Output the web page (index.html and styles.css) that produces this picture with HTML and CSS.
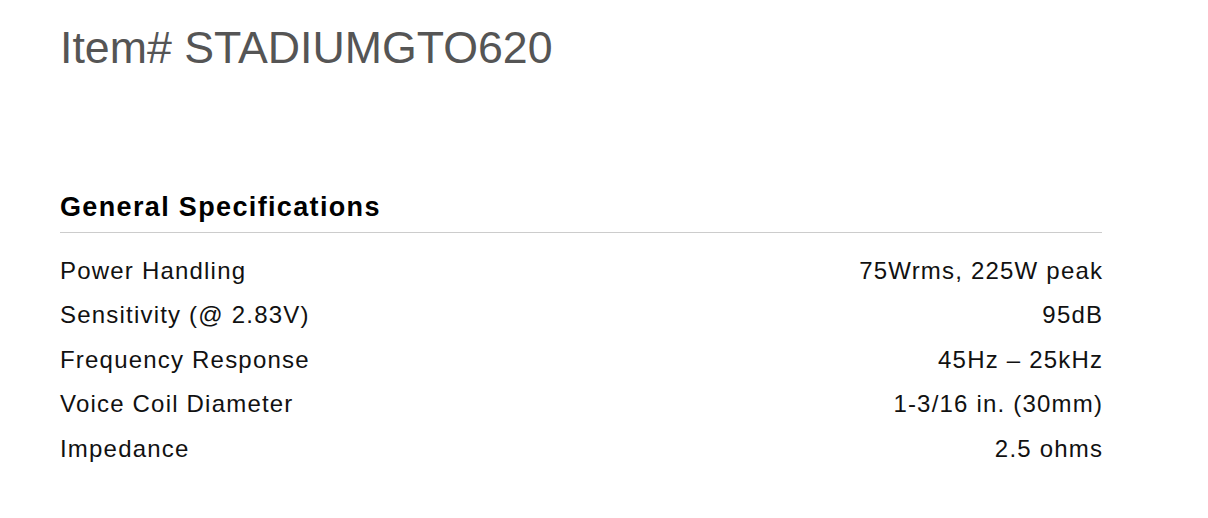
FILE: index.html
```html
<!DOCTYPE html>
<html>
<head>
<meta charset="utf-8">
<link rel="stylesheet" href="styles.css">
</head>
<body>
<div class="page">
  <h1 class="item-title">Item# STADIUMGTO620</h1>
  <section class="specs">
    <h2 class="specs-heading">General Specifications</h2>
    <div class="spec-list">
      <div class="spec-row"><span class="spec-label">Power Handling</span><span class="spec-value">75Wrms, 225W peak</span></div>
      <div class="spec-row"><span class="spec-label">Sensitivity (@ 2.83V)</span><span class="spec-value">95dB</span></div>
      <div class="spec-row"><span class="spec-label">Frequency Response</span><span class="spec-value">45Hz – 25kHz</span></div>
      <div class="spec-row"><span class="spec-label">Voice Coil Diameter</span><span class="spec-value">1-3/16 in. (30mm)</span></div>
      <div class="spec-row"><span class="spec-label">Impedance</span><span class="spec-value">2.5 ohms</span></div>
    </div>
  </section>
</div>
</body>
</html>
```
FILE: styles.css
```css
html, body {
  margin: 0;
  padding: 0;
  background: #ffffff;
}
body {
  font-family: "Liberation Sans", Arial, Helvetica, sans-serif;
}
.page {
  width: 1042px;
  padding: 22px 0 0 60px;
}
.item-title {
  margin: 0;
  font-size: 44.7px;
  line-height: 52.8px;
  font-weight: 400;
  color: #555555;
}
.specs {
  margin-top: 116px;
}
.specs-heading {
  margin: 0;
  font-size: 27px;
  line-height: 32px;
  font-weight: 700;
  color: #000000;
  letter-spacing: 0.05em;
  padding-bottom: 9px;
  border-bottom: 1px solid #cccccc;
}
.spec-list {
  display: flex;
  flex-direction: column;
  padding-top: 16px;
}
.spec-row {
  display: flex;
  justify-content: space-between;
  height: 44.5px;
  line-height: 44.5px;
  font-size: 24px;
  color: #111111;
  letter-spacing: 0.05em;
}
.spec-value {
  text-align: right;
  margin-right: -0.05em;
}
```
